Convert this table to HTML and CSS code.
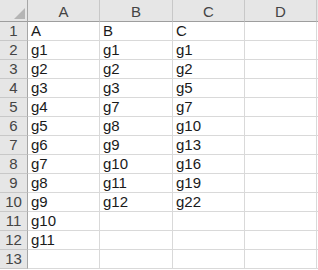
FILE: index.html
```html
<!DOCTYPE html>
<html>
<head>
<meta charset="utf-8">
<link rel="stylesheet" href="styles.css">
</head>
<body>
<div class="sheet">
  <div class="corner"><span class="tri"></span></div>
  <div class="ch">A</div><div class="ch">B</div><div class="ch">C</div><div class="ch">D</div><div class="ch end"></div>

  <div class="rh">1</div><div class="c">A</div><div class="c">B</div><div class="c">C</div><div class="c"></div><div class="c end"></div>
  <div class="rh">2</div><div class="c">g1</div><div class="c">g1</div><div class="c">g1</div><div class="c"></div><div class="c end"></div>
  <div class="rh">3</div><div class="c">g2</div><div class="c">g2</div><div class="c">g2</div><div class="c"></div><div class="c end"></div>
  <div class="rh">4</div><div class="c">g3</div><div class="c">g3</div><div class="c">g5</div><div class="c"></div><div class="c end"></div>
  <div class="rh">5</div><div class="c">g4</div><div class="c">g7</div><div class="c">g7</div><div class="c"></div><div class="c end"></div>
  <div class="rh">6</div><div class="c">g5</div><div class="c">g8</div><div class="c">g10</div><div class="c"></div><div class="c end"></div>
  <div class="rh">7</div><div class="c">g6</div><div class="c">g9</div><div class="c">g13</div><div class="c"></div><div class="c end"></div>
  <div class="rh">8</div><div class="c">g7</div><div class="c">g10</div><div class="c">g16</div><div class="c"></div><div class="c end"></div>
  <div class="rh">9</div><div class="c">g8</div><div class="c">g11</div><div class="c">g19</div><div class="c"></div><div class="c end"></div>
  <div class="rh">10</div><div class="c">g9</div><div class="c">g12</div><div class="c">g22</div><div class="c"></div><div class="c end"></div>
  <div class="rh">11</div><div class="c">g10</div><div class="c"></div><div class="c"></div><div class="c"></div><div class="c end"></div>
  <div class="rh">12</div><div class="c">g11</div><div class="c"></div><div class="c"></div><div class="c"></div><div class="c end"></div>
  <div class="rh">13</div><div class="c"></div><div class="c"></div><div class="c"></div><div class="c"></div><div class="c end"></div>
</div>
</body>
</html>
```

FILE: styles.css
```css
html, body {
  margin: 0;
  padding: 0;
  background: #ffffff;
}

.sheet {
  display: grid;
  grid-template-columns: 28px 72px 73px 72px 72px 1fr;
  grid-template-rows: 22px repeat(13, 19px);
  width: 318px;
  height: 270px;
  overflow: hidden;
  font-family: "Liberation Sans", Arial, sans-serif;
  font-size: 15px;
  color: #1a1a1a;
}

.corner {
  position: relative;
  background: #e6e6e6;
  border-right: 1px solid #a6a6a6;
  border-bottom: 1px solid #9e9e9e;
}

.tri {
  position: absolute;
  right: 2px;
  bottom: 2px;
  width: 0;
  height: 0;
  border-style: solid;
  border-width: 0 0 11px 11px;
  border-color: transparent transparent #b5b5b5 transparent;
}

.ch {
  background: #e6e6e6;
  border-right: 1px solid #c8c8c8;
  border-bottom: 1px solid #9e9e9e;
  display: flex;
  align-items: center;
  justify-content: center;
  color: #444;
  padding-top: 2px;
}

.ch.end {
  border-right: none;
}

.rh {
  background: #e6e6e6;
  border-right: 1px solid #a6a6a6;
  border-bottom: 1px solid #c8c8c8;
  display: flex;
  align-items: flex-end;
  justify-content: center;
  color: #444;
  line-height: 18px;
}

.c {
  border-right: 1px solid #d9d9d9;
  border-bottom: 1px solid #d9d9d9;
  display: flex;
  align-items: flex-end;
  padding-left: 3px;
  line-height: 18px;
  white-space: nowrap;
}

.c.end {
  border-right: none;
}
```
